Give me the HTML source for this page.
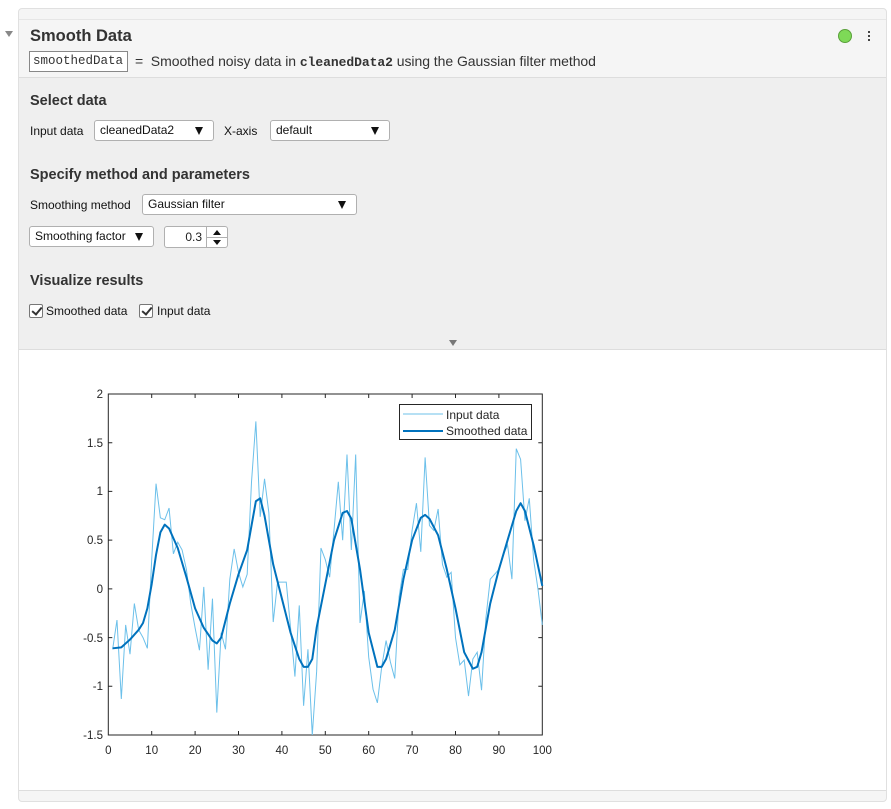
<!DOCTYPE html>
<html><head><meta charset="utf-8">
<style>
*{box-sizing:border-box;margin:0;padding:0}
body{width:891px;height:809px;background:#fff;font-family:"Liberation Sans",Arial,sans-serif;position:relative;overflow:hidden;color:#212121}
.a{position:absolute}
.box{left:18px;top:8px;width:869px;height:794px;border:1px solid #e0e0e0;border-radius:4px;background:#f5f5f5}
.dd{position:absolute;height:21px;border:1px solid #b0b0b0;border-radius:3px;background:#fff;font-size:12px;line-height:19px;padding-left:5px;color:#111}
.dd:after{content:"";position:absolute;right:10px;top:6px;border-left:4px solid transparent;border-right:4px solid transparent;border-top:8px solid #111}
.lbl{position:absolute;font-size:12px;color:#111}
.h{position:absolute;font-size:14.5px;font-weight:bold;color:#333}
.cb{position:absolute;width:14px;height:14px;border:1px solid #777;background:#fff;border-radius:2px}
.cb:after{content:"";position:absolute;left:4px;top:0px;width:4px;height:8px;border-right:2px solid #333;border-bottom:2px solid #333;transform:rotate(40deg)}
svg text{font-family:"Liberation Sans",Arial,sans-serif;font-size:11.5px;fill:#262626}
</style></head><body>
<div class="a" style="left:5px;top:31px;border-left:4px solid transparent;border-right:4px solid transparent;border-top:6px solid #888"></div>
<div class="a box"></div>
<div class="a" style="left:19px;top:19px;width:867px;height:1px;background:#e6e6e6"></div>
<div class="a" style="left:30px;top:27px;font-size:16.5px;font-weight:bold;color:#333">Smooth Data</div>
<div class="a" style="left:838px;top:29px;width:14px;height:14px;border-radius:50%;background:#7ed957;border:1px solid #5aa03a"></div>
<div class="a" style="left:868px;top:31px;width:2px;height:2px;background:#444;box-shadow:0 4px #444,0 8px #444"></div>
<div class="a" style="left:29px;top:51px;width:99px;height:21px;border:1px solid #888;background:#fff;font-family:'Liberation Mono',monospace;font-size:12.5px;line-height:19px;padding-left:3px;color:#333">smoothedData</div>
<div class="a" style="left:135px;top:53px;font-size:14px;letter-spacing:-0.05px;color:#333">=&nbsp; Smoothed noisy data in <span style="font-family:'Liberation Mono',monospace;font-weight:bold;font-size:13px">cleanedData2</span> using the Gaussian filter method</div>
<div class="a" style="left:19px;top:77px;width:867px;height:273px;background:#efefef;border-top:1px solid #ddd;border-bottom:1px solid #ddd"></div>
<div class="h" style="left:30px;top:93px">Select data</div>
<div class="lbl" style="left:30px;top:124px">Input data</div>
<div class="dd" style="left:94px;top:120px;width:120px">cleanedData2</div>
<div class="lbl" style="left:224px;top:124px">X-axis</div>
<div class="dd" style="left:270px;top:120px;width:120px">default</div>
<div class="h" style="left:30px;top:167px">Specify method and parameters</div>
<div class="lbl" style="left:30px;top:198px">Smoothing method</div>
<div class="dd" style="left:142px;top:194px;width:215px">Gaussian filter</div>
<div class="dd" style="left:29px;top:226px;width:125px">Smoothing factor</div>
<div class="a" style="left:164px;top:226px;width:64px;height:22px;border:1px solid #b0b0b0;border-radius:3px;background:#fff;font-size:12px;line-height:20px"><span style="position:absolute;right:25px;top:0">0.3</span><div style="position:absolute;left:41px;top:0;width:1px;height:20px;background:#b0b0b0"></div><div style="position:absolute;left:42px;top:10px;width:20px;height:1px;background:#b0b0b0"></div><div style="position:absolute;left:48px;top:3px;border-left:4px solid transparent;border-right:4px solid transparent;border-bottom:5px solid #111"></div><div style="position:absolute;left:48px;top:13px;border-left:4px solid transparent;border-right:4px solid transparent;border-top:5px solid #111"></div></div>
<div class="h" style="left:30px;top:273px">Visualize results</div>
<div class="cb" style="left:29px;top:304px"></div>
<div class="lbl" style="left:46px;top:304px">Smoothed data</div>
<div class="cb" style="left:139px;top:304px"></div>
<div class="lbl" style="left:157px;top:304px">Input data</div>
<div class="a" style="left:449px;top:340px;border-left:4px solid transparent;border-right:4px solid transparent;border-top:6px solid #777"></div>
<div class="a" style="left:19px;top:350px;width:867px;height:441px;background:#fff;border-bottom:1px solid #ddd"></div>
<svg class="a" style="left:0;top:0" width="891" height="809">
<rect x="108.3" y="394" width="434" height="341" fill="#fff" stroke="#262626" stroke-width="1"/>
<g stroke="#262626" stroke-width="1">
<path d="M151.7 735v-4M195.1 735v-4M238.5 735v-4M281.9 735v-4M325.3 735v-4M368.7 735v-4M412.1 735v-4M455.5 735v-4M498.9 735v-4M151.7 394v4M195.1 394v4M238.5 394v4M281.9 394v4M325.3 394v4M368.7 394v4M412.1 394v4M455.5 394v4M498.9 394v4"/>
<path d="M108.3 442.7h4M108.3 491.4h4M108.3 540.1h4M108.3 588.9h4M108.3 637.6h4M108.3 686.3h4M542.3 442.7h-4M542.3 491.4h-4M542.3 540.1h-4M542.3 588.9h-4M542.3 637.6h-4M542.3 686.3h-4"/>
</g>
<g text-anchor="middle">
<text x="108.3" y="754">0</text><text x="151.7" y="754">10</text><text x="195.1" y="754">20</text><text x="238.5" y="754">30</text><text x="281.9" y="754">40</text><text x="325.3" y="754">50</text><text x="368.7" y="754">60</text><text x="412.1" y="754">70</text><text x="455.5" y="754">80</text><text x="498.9" y="754">90</text><text x="542.3" y="754">100</text>
</g>
<g text-anchor="end">
<text x="103" y="398">2</text><text x="103" y="447">1.5</text><text x="103" y="495">1</text><text x="103" y="544">0.5</text><text x="103" y="593">0</text><text x="103" y="642">-0.5</text><text x="103" y="690">-1</text><text x="103" y="739">-1.5</text>
</g>
<g transform="translate(108.3,588.9) scale(4.34,-97.4)" fill="none">
<polyline vector-effect="non-scaling-stroke" stroke="#6cc0ea" stroke-width="1" points="1,-0.62 2,-0.32 3,-1.13 4,-0.37 5,-0.67 6,-0.15 7,-0.42 8,-0.5 9,-0.61 10,0.3 11,1.08 12,0.73 13,0.71 14,0.83 15,0.36 16,0.48 17,0.4 18,0.2 19,-0.15 20,-0.4 21,-0.63 22,0.02 23,-0.83 24,-0.1 25,-1.27 26,-0.45 27,-0.62 28,0.1 29,0.41 30,0.17 31,0.02 32,0.15 33,1.1 34,1.72 35,0.74 36,1.13 37,0.78 38,-0.34 39,0.07 40,0.07 41,0.07 42,-0.4 43,-0.9 44,-0.17 45,-1.2 46,-0.62 47,-1.5 48,-0.85 49,0.42 50,0.3 51,0.12 52,0.6 53,1.1 54,0.5 55,1.38 56,0.4 57,1.38 58,-0.35 59,-0.02 60,-0.7 61,-1.03 62,-1.17 63,-0.8 64,-0.53 65,-0.75 66,-0.92 67,-0.08 68,0.2 69,0.2 70,0.6 71,0.88 72,0.38 73,1.35 74,0.65 75,0.6 76,0.82 77,0.25 78,0.12 79,0.17 80,-0.5 81,-0.78 82,-0.73 83,-1.1 84,-0.72 85,-0.65 86,-1.04 87,-0.3 88,0.1 89,0.15 90,0.2 91,0.35 92,0.45 93,0.1 94,1.44 95,1.33 96,0.7 97,0.93 98,0.3 99,0 100,-0.37"/>
<polyline vector-effect="non-scaling-stroke" stroke="#0072bd" stroke-width="2" stroke-linejoin="round" points="1,-0.61 3,-0.6 5,-0.52 7,-0.42 8,-0.35 9,-0.2 10,0.05 11,0.35 12,0.58 13,0.66 14,0.62 16,0.42 18,0.12 20,-0.2 22,-0.4 24,-0.53 25,-0.56 26,-0.5 28,-0.15 30,0.15 32,0.4 33,0.65 34,0.9 35,0.93 36,0.75 38,0.25 40,-0.1 42,-0.45 44,-0.72 45,-0.8 46,-0.8 47,-0.72 48,-0.4 50,0.05 52,0.5 54,0.78 55,0.8 56,0.72 58,0.2 60,-0.45 62,-0.8 63,-0.8 64,-0.72 66,-0.42 68,0.1 70,0.5 72,0.73 73,0.76 74,0.72 76,0.55 78,0.2 80,-0.2 82,-0.65 84,-0.82 85,-0.8 86,-0.65 88,-0.15 90,0.2 92,0.5 94,0.8 95,0.88 96,0.8 98,0.45 100,0.03"/>
</g>
<rect x="399.5" y="404.5" width="132" height="35" fill="#fff" stroke="#262626"/>
<line x1="403" y1="414" x2="443" y2="414" stroke="#6cc0ea"/>
<line x1="403" y1="431" x2="443" y2="431" stroke="#0072bd" stroke-width="2"/>
<text x="446" y="419" style="font-size:12px">Input data</text>
<text x="446" y="435" style="font-size:12px">Smoothed data</text>
</svg>
</body></html>
